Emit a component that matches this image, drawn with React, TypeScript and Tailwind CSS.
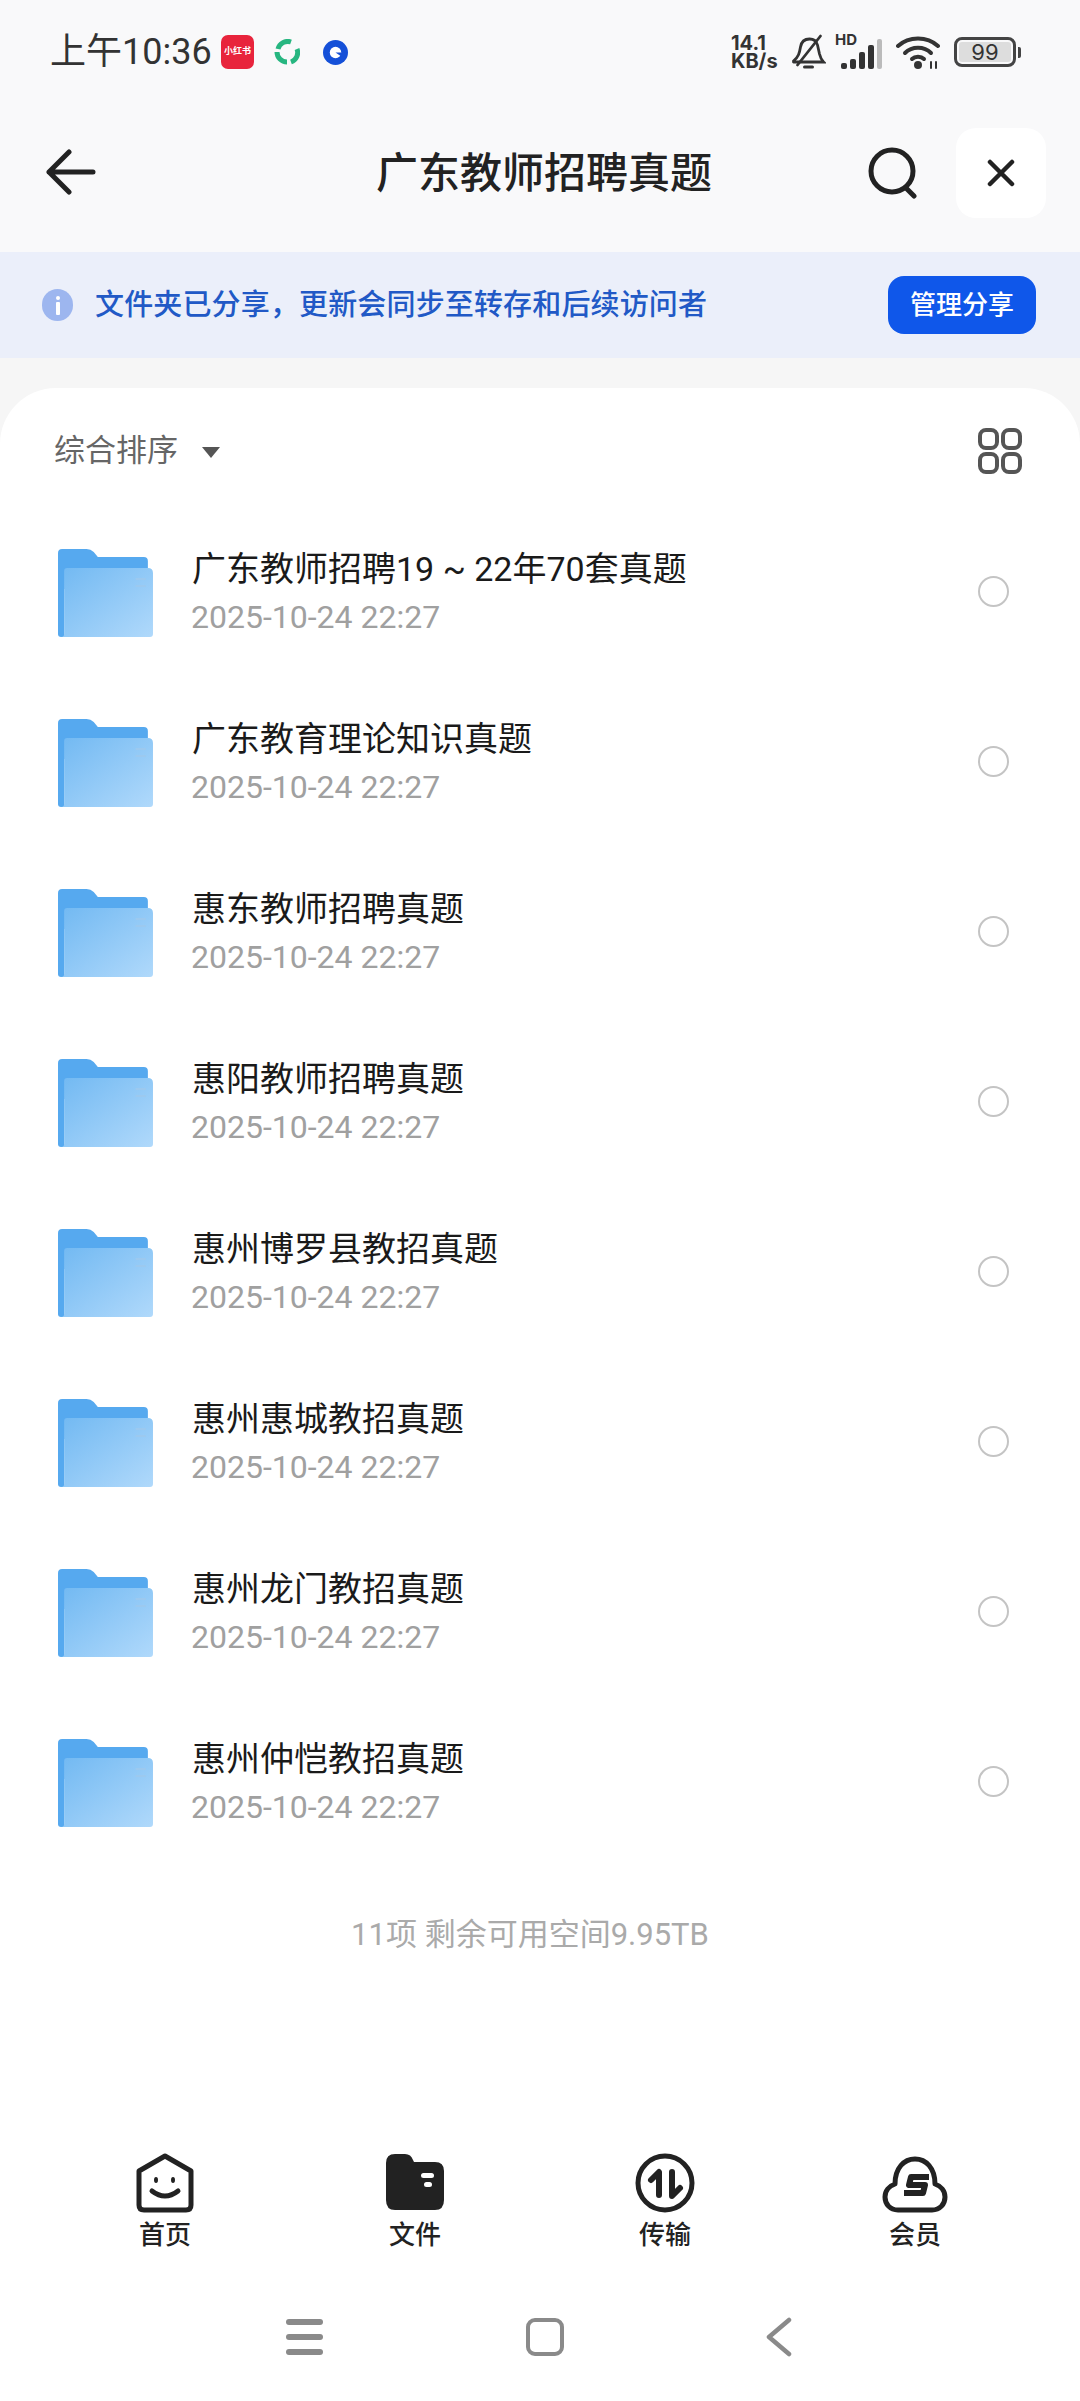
const folders = [
  "广东教师招聘19 ~ 22年70套真题",
  "广东教育理论知识真题",
  "惠东教师招聘真题",
  "惠阳教师招聘真题",
  "惠州博罗县教招真题",
  "惠州惠城教招真题",
  "惠州龙门教招真题",
  "惠州仲恺教招真题",
]

function FolderIcon() {
  return (
    <svg width="96" height="88" viewBox="0 0 94 88" preserveAspectRatio="none" className="shrink-0 mt-[1px]">
      <defs>
        <linearGradient id="folderFront" x1="0" y1="0" x2="1" y2="1">
          <stop offset="0" stopColor="#72b9f2" />
          <stop offset="1" stopColor="#b0d9fb" />
        </linearGradient>
      </defs>
      <path d="M4 0H28Q32 0 35 3L39 8H84Q88 8 88 12V40H0V4Q0 0 4 0Z" fill="#56a9ef" />
      <path d="M0 20H6V88H3Q0 88 0 85Z" fill="#56a9ef" />
      <path d="M9 19H88Q93 19 93 24V85Q93 88 90 88H3Q6 88 6 85V22Q6 19 9 19Z" fill="url(#folderFront)" />
      <rect x="76" y="29" width="10" height="2" fill="#9cc9ef" />
      <rect x="76" y="36" width="10" height="2" fill="#9cc9ef" />
    </svg>
  )
}

function StatusBar() {
  return (
    <div className="h-[106px] flex items-center justify-between pl-[50px] pr-[59px] pb-[2px]">
      <div className="flex items-center">
        <span className="text-[36px] text-[#333] leading-none w-[171px]">上午10:36</span>
        <div className="w-[33px] h-[34px] rounded-[7px] bg-[#e8243c] flex items-center justify-center text-white text-[9px] font-bold whitespace-nowrap overflow-hidden">
          小红书
        </div>
        <svg width="26" height="26" viewBox="0 0 26 26" className="ml-[20px]" fill="none" stroke="#27b680" strokeWidth="5">
          <path d="M4 10A10 10 0 0 1 17 3" />
          <path d="M23 10A10 10 0 0 1 17 23" />
          <path d="M13 23A10 10 0 0 1 3 13" />
        </svg>
        <svg width="25" height="25" viewBox="0 0 24 24" className="ml-[23px]">
          <circle cx="12" cy="12" r="12" fill="#1550d8" />
          <circle cx="12" cy="12" r="5.5" fill="#fff" />
          <path d="M12 12h6v4z" fill="#1550d8" />
        </svg>
      </div>
      <div className="flex items-center text-[#333]">
        <div className="w-[48px] text-[20px] leading-[18px] font-bold whitespace-nowrap font-['Inter',sans-serif]">
          14.1
          <br />
          KB/s
        </div>
        <svg width="35" height="36" viewBox="0 0 34 36" className="ml-[12px]" fill="none" stroke="#333" strokeWidth="2.8" strokeLinecap="round">
          <path d="M2 27C7 23 8 19 9 13C10 7 14 5 18 5C22 5 25 7 26 11L28 20C29 24 30 26 32 28H2" />
          <path d="M13 33H21" strokeWidth="3" />
          <path d="M6 31L29 2" />
        </svg>
        <div className="relative w-[47px] h-[34px] ml-[9px]">
          <span className="absolute left-0 top-[-3px] text-[15px] leading-none font-bold font-['Inter',sans-serif]">HD</span>
          <div className="absolute right-0 bottom-0 flex items-end gap-[3px]">
            <div className="w-[6px] h-[6px] rounded-[2px] bg-[#333]" />
            <div className="w-[6px] h-[10px] rounded-[2px] bg-[#333]" />
            <div className="w-[6px] h-[17px] rounded-[2px] bg-[#333]" />
            <div className="w-[6px] h-[24px] rounded-[2px] bg-[#333]" />
            <div className="w-[5px] h-[30px] rounded-[2px] bg-[#bbb]" />
          </div>
        </div>
        <svg width="44" height="34" viewBox="0 0 44 34" className="ml-[14px]" fill="none" stroke="#333" strokeWidth="4" strokeLinecap="round">
          <path d="M2 11C13 1 31 1 42 11" />
          <path d="M9 18C16 11 28 11 35 18" />
          <path d="M16 24C19 21 25 21 28 24" />
          <circle cx="22" cy="30" r="2" fill="#333" />
          <path d="M35 27V33M40 27V33" strokeWidth="2" />
        </svg>
        <div className="flex items-center ml-[14px]">
          <div className="w-[62px] h-[30px] rounded-[8px] border-[3px] border-[#444] p-[2px]">
            <div className="w-full h-full rounded-[3px] bg-[#ddd] flex items-center justify-center text-[22px] leading-none text-[#333] font-['Inter',sans-serif]">
              99
            </div>
          </div>
          <div className="w-[3px] h-[11px] ml-[2px] rounded-r-[2px] bg-[#444]" />
        </div>
      </div>
    </div>
  )
}

function Header() {
  return (
    <div className="relative h-[146px] flex items-start justify-between pl-[46px] pr-[34px] pt-[22px]">
      <svg width="50" height="46" viewBox="0 0 50 46" className="mt-[21px]" fill="none" stroke="#222" strokeWidth="5" strokeLinecap="round" strokeLinejoin="round">
        <path d="M47 23H3M23 3L3 23L23 43" />
      </svg>
      <h1 className="absolute left-0 right-0 top-[42px] text-center text-[42px] leading-[52px] font-medium text-[#222] pl-[8px]">
        广东教师招聘真题
      </h1>
      <div className="flex items-start">
        <svg width="50" height="52" viewBox="0 0 50 52" className="mt-[19px]" fill="none" stroke="#222" strokeWidth="5" strokeLinecap="round">
          <circle cx="24" cy="24" r="21" />
          <path d="M38 41L46 49" />
        </svg>
        <div className="w-[90px] h-[90px] ml-[38px] rounded-[20px] bg-white flex items-center justify-center">
          <svg width="28" height="28" viewBox="0 0 28 28" fill="none" stroke="#222" strokeWidth="4.5" strokeLinecap="round">
            <path d="M3 3L25 25M25 3L3 25" />
          </svg>
        </div>
      </div>
    </div>
  )
}

function ShareBanner() {
  return (
    <div className="h-[106px] bg-[#ebeffa] flex items-center pl-[42px] pr-[44px]">
      <div className="w-[31px] h-[32px] rounded-full bg-[#9db6ef] flex flex-col items-center justify-center gap-[2px]">
        <div className="w-[4px] h-[4px] bg-white rounded-full" />
        <div className="w-[4px] h-[13px] bg-white rounded-[1px]" />
      </div>
      <span className="ml-[22px] text-[29px] tracking-[0.15px] leading-none font-medium text-[#2159c6] whitespace-nowrap">
        文件夹已分享，更新会同步至转存和后续访问者
      </span>
      <button className="ml-auto w-[148px] h-[58px] rounded-[16px] bg-[#0f57ea] text-white text-[26px] font-medium">
        管理分享
      </button>
    </div>
  )
}

function FolderRow({ name }: { name: string }) {
  return (
    <div className="h-[170px] flex items-center pl-[58px] pr-[71px]">
      <FolderIcon />
      <div className="ml-[37px] flex-1 min-w-0">
        <div className="pl-[1px] text-[34px] leading-[44px] text-[#1a1a1a] whitespace-nowrap">{name}</div>
        <div className="mt-[6px] text-[32px] leading-[40px] text-[#a0a0a0] font-['Roboto',sans-serif]">2025-10-24 22:27</div>
      </div>
      <div className="mb-[2px] w-[31px] h-[31px] rounded-full border-[2px] border-[#c4c4c4]" />
    </div>
  )
}

function TabBar() {
  return (
    <div className="flex px-[40px] text-[#222]">
      <div className="flex-1 flex flex-col items-center">
        <svg width="60" height="60" viewBox="0 0 60 60" fill="none" stroke="#222" strokeWidth="5" strokeLinejoin="round">
          <path d="M30 3L56 18V52Q56 57 51 57H9Q4 57 4 52V18Z" />
          <ellipse cx="21" cy="27" rx="2" ry="3" fill="#222" stroke="none" />
          <ellipse cx="38" cy="27" rx="2" ry="3" fill="#222" stroke="none" />
          <path d="M17 38Q30 48 43 38" strokeLinecap="round" />
        </svg>
        <span className="mt-[5px] text-[26px] leading-[34px] font-medium">首页</span>
      </div>
      <div className="flex-1 flex flex-col items-center">
        <svg width="60" height="60" viewBox="0 0 60 60">
          <path d="M10 1H20Q26 1 28 7L29 9H50Q59 9 59 18V47Q59 57 50 57H10Q1 57 1 47V10Q1 1 10 1Z" fill="#222" />
          <rect x="36" y="20" width="13" height="5" rx="2.5" fill="#fff" />
          <rect x="39" y="29" width="8" height="5" rx="2.5" fill="#fff" />
        </svg>
        <span className="mt-[5px] text-[26px] leading-[34px] font-medium">文件</span>
      </div>
      <div className="flex-1 flex flex-col items-center">
        <svg width="60" height="60" viewBox="0 0 60 60" fill="none" stroke="#222" strokeWidth="5">
          <circle cx="30" cy="30" r="27" />
          <path d="M16 27L24 19V42M37 19V43L45 35" strokeWidth="6" strokeLinecap="round" strokeLinejoin="round" />
        </svg>
        <span className="mt-[5px] text-[26px] leading-[34px] font-medium">传输</span>
      </div>
      <div className="flex-1 flex flex-col items-center">
        <svg width="66" height="60" viewBox="0 0 66 60" fill="none" stroke="#222" strokeWidth="5" strokeLinejoin="round">
          <path d="M16 57C8 57 3 51 3 44C3 38 7 33 13 31C13 15 22 6 33 6C44 6 53 15 53 31C59 33 63 38 63 44C63 51 58 57 50 57Z" />
          <path d="M47 24H29L27 32H43L41 40H22" strokeWidth="6" />
        </svg>
        <span className="mt-[5px] text-[26px] leading-[34px] font-medium">会员</span>
      </div>
    </div>
  )
}

function SystemNav() {
  return (
    <div className="flex items-center justify-between pl-[286px] pr-[288px] mt-[65px]">
      <div className="flex flex-col gap-[9px]">
        <div className="w-[37px] h-[6px] rounded-full bg-[#8a8a8a]" />
        <div className="w-[37px] h-[6px] rounded-full bg-[#8a8a8a]" />
        <div className="w-[37px] h-[6px] rounded-full bg-[#8a8a8a]" />
      </div>
      <div className="w-[38px] h-[38px] rounded-[9px] border-[4px] border-[#8a8a8a]" />
      <svg width="26" height="40" viewBox="0 0 26 40" fill="none" stroke="#8a8a8a" strokeWidth="4.5" strokeLinecap="round" strokeLinejoin="round">
        <path d="M23 3L3 20L23 37" />
      </svg>
    </div>
  )
}

export default function App() {
  return (
    <div className="w-[1080px] h-[2401px] overflow-hidden bg-[#f6f6f6] flex flex-col font-['Roboto','Noto_Sans_CJK_SC',sans-serif]">
      <div className="bg-[#f9f9fa]">
        <StatusBar />
        <Header />
      </div>
      <ShareBanner />
      <main className="mt-[30px] flex-1 rounded-t-[56px] bg-white flex flex-col">
        <div className="flex items-center justify-between pl-[54px] pr-[58px] pt-[40px]">
          <div className="flex items-center">
            <span className="text-[31px] leading-[46px] text-[#666]">综合排序</span>
            <div className="ml-[24px] mt-[2px] w-0 h-0 border-x-[9px] border-x-transparent border-t-[11px] border-t-[#555]" />
          </div>
          <svg width="44" height="46" viewBox="0 0 44 46" fill="none" stroke="#555" strokeWidth="4">
            <rect x="2" y="2" width="17" height="18" rx="6" />
            <rect x="25" y="2" width="17" height="18" rx="6" />
            <rect x="2" y="26" width="17" height="18" rx="6" />
            <rect x="25" y="26" width="17" height="18" rx="6" />
          </svg>
        </div>
        <div className="mt-[33px]">
          {folders.map((name) => (
            <FolderRow key={name} name={name} />
          ))}
        </div>
        <p className="mt-[48px] pr-[20px] text-center text-[31px] leading-[40px] text-[#aaa]">11项 剩余可用空间9.95TB</p>
        <div className="mt-auto pb-[44px]">
          <TabBar />
          <SystemNav />
        </div>
      </main>
    </div>
  )
}
